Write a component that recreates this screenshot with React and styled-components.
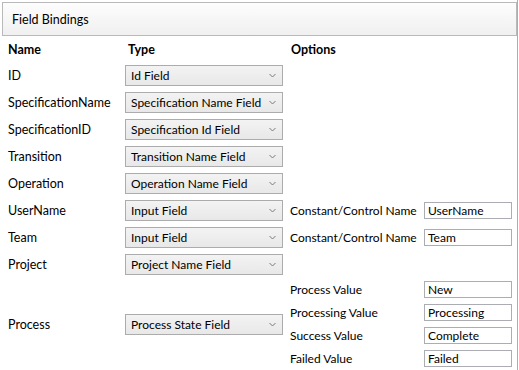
import React from 'react';
import styled, { createGlobalStyle } from 'styled-components';

const GlobalStyle = createGlobalStyle`
  body {
    margin: 0;
    background: #ffffff;
    font-family: Lato, 'Noto Sans', sans-serif;
    font-size: 12px;
    color: #000000;
  }
`;

const Page = styled.div`
  width: 517px;
  height: 368px;
  padding-top: 2px;
  border-right: 1px solid #adadad;
  overflow: hidden;
`;

const PanelHeader = styled.div`
  height: 32px;
  margin-left: 2px;
  border: 1px solid #b9b9b9;
  background: linear-gradient(#fdfdfd, #f0f0f0);
  display: flex;
  align-items: center;
  padding-left: 9px;
  font-size: 12.5px;
`;

const Table = styled.div`
  display: grid;
  grid-template-columns: minmax(0, 110px) minmax(0, 158px) minmax(0, 1fr);
  column-gap: 7px;
  padding-left: 8px;
  align-items: center;
`;

const HeadCell = styled.div`
  font-weight: bold;
  font-size: 12.5px;
  height: 26px;
  line-height: 27px;
  padding-left: ${(props) => props.indent || 0}px;
`;

const Cell = styled.div`
  min-height: 27px;
  display: flex;
  align-items: center;
  white-space: nowrap;
  font-size: 12.5px;
`;

const Select = styled.div`
  height: 19px;
  border: 1px solid #acacac;
  background: linear-gradient(#f3f3f3, #e8e8e8);
  display: flex;
  align-items: center;
  justify-content: space-between;
  padding: 0 6px 0 5px;
  white-space: nowrap;
`;

const Chevron = styled.svg`
  width: 7px;
  height: 5px;
  flex: none;
`;

const Options = styled.div`
  display: grid;
  grid-template-columns: minmax(0, 134px) minmax(0, 88px);
  grid-auto-rows: ${(props) => props.rowHeight || 27}px;
  align-items: center;
  white-space: nowrap;
`;

const TextBox = styled.div`
  height: 15px;
  border: 1px solid #abadb3;
  background: #ffffff;
  padding-left: 3px;
  display: flex;
  align-items: center;
`;

const fields = [
  { name: 'ID', type: 'Id Field' },
  { name: 'SpecificationName', type: 'Specification Name Field' },
  { name: 'SpecificationID', type: 'Specification Id Field' },
  { name: 'Transition', type: 'Transition Name Field' },
  { name: 'Operation', type: 'Operation Name Field' },
  { name: 'UserName', type: 'Input Field', options: [['Constant/Control Name', 'UserName']] },
  { name: 'Team', type: 'Input Field', options: [['Constant/Control Name', 'Team']] },
  { name: 'Project', type: 'Project Name Field' },
  {
    name: 'Process',
    type: 'Process State Field',
    rowHeight: 23,
    options: [
      ['Process Value', 'New'],
      ['Processing Value', 'Processing'],
      ['Success Value', 'Complete'],
      ['Failed Value', 'Failed'],
    ],
  },
];

const Dropdown = ({ value }) => (
  <Select>
    <span>{value}</span>
    <Chevron viewBox="0 0 7 5">
      <path d="M0.5 1 L3.5 4 L6.5 1" fill="none" stroke="#7a7a7a" strokeWidth="1" />
    </Chevron>
  </Select>
);

const OptionList = ({ items, rowHeight }) => (
  <Options rowHeight={rowHeight}>
    {items.map(([label, value]) => (
      <React.Fragment key={label}>
        <span>{label}</span>
        <TextBox>{value}</TextBox>
      </React.Fragment>
    ))}
  </Options>
);

const App = () => (
  <Page>
    <GlobalStyle />
    <PanelHeader>Field Bindings</PanelHeader>
    <Table>
      <HeadCell>Name</HeadCell>
      <HeadCell indent={3}>Type</HeadCell>
      <HeadCell indent={1}>Options</HeadCell>
      {fields.map((f) => (
        <React.Fragment key={f.name}>
          <Cell>{f.name}</Cell>
          <Dropdown value={f.type} />
          {f.options ? <OptionList items={f.options} rowHeight={f.rowHeight} /> : <Cell />}
        </React.Fragment>
      ))}
    </Table>
  </Page>
);

export default App;
